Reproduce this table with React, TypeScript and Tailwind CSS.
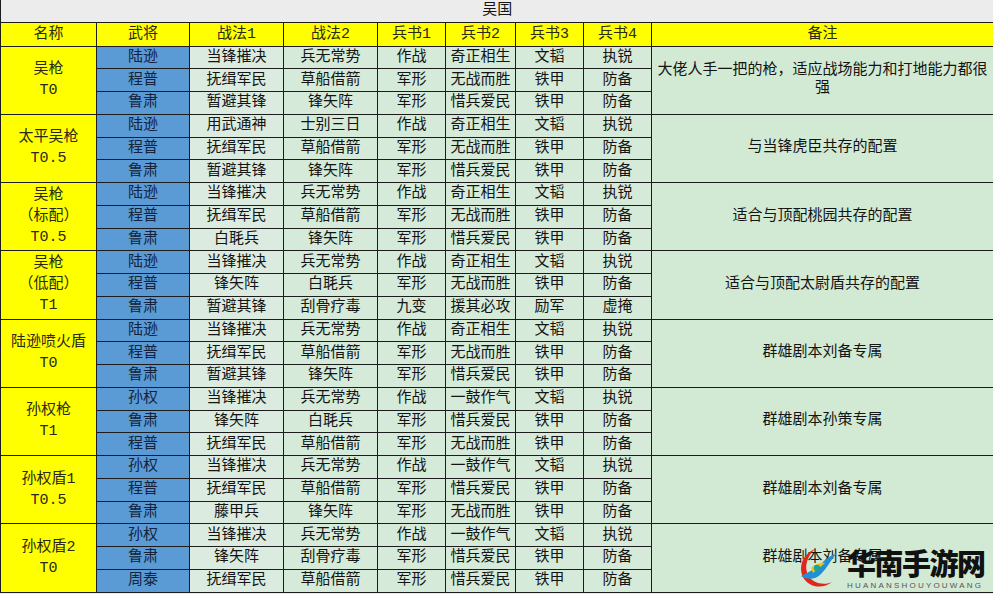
import React from "react";

type Row = [string, string, string, string, string, string, string];
type Group = { name: string[]; rows: Row[]; note: string };

const groups: Group[] = [
  {
    name: ["吴枪", "T0"],
    rows: [
      ["陆逊", "当锋摧决", "兵无常势", "作战", "奇正相生", "文韬", "执锐"],
      ["程普", "抚缉军民", "草船借箭", "军形", "无战而胜", "铁甲", "防备"],
      ["鲁肃", "暂避其锋", "锋矢阵", "军形", "惜兵爱民", "铁甲", "防备"],
    ],
    note: "大佬人手一把的枪，适应战场能力和打地能力都很强",
  },
  {
    name: ["太平吴枪", "T0.5"],
    rows: [
      ["陆逊", "用武通神", "士别三日", "作战", "奇正相生", "文韬", "执锐"],
      ["程普", "抚缉军民", "草船借箭", "军形", "无战而胜", "铁甲", "防备"],
      ["鲁肃", "暂避其锋", "锋矢阵", "军形", "惜兵爱民", "铁甲", "防备"],
    ],
    note: "与当锋虎臣共存的配置",
  },
  {
    name: ["吴枪", "（标配）", "T0.5"],
    rows: [
      ["陆逊", "当锋摧决", "兵无常势", "作战", "奇正相生", "文韬", "执锐"],
      ["程普", "抚缉军民", "草船借箭", "军形", "无战而胜", "铁甲", "防备"],
      ["鲁肃", "白毦兵", "锋矢阵", "军形", "惜兵爱民", "铁甲", "防备"],
    ],
    note: "适合与顶配桃园共存的配置",
  },
  {
    name: ["吴枪", "（低配）", "T1"],
    rows: [
      ["陆逊", "当锋摧决", "兵无常势", "作战", "奇正相生", "文韬", "执锐"],
      ["程普", "锋矢阵", "白毦兵", "军形", "无战而胜", "铁甲", "防备"],
      ["鲁肃", "暂避其锋", "刮骨疗毒", "九变", "援其必攻", "励军", "虚掩"],
    ],
    note: "适合与顶配太尉盾共存的配置",
  },
  {
    name: ["陆逊喷火盾", "T0"],
    rows: [
      ["陆逊", "当锋摧决", "兵无常势", "作战", "奇正相生", "文韬", "执锐"],
      ["程普", "抚缉军民", "草船借箭", "军形", "无战而胜", "铁甲", "防备"],
      ["鲁肃", "暂避其锋", "锋矢阵", "军形", "惜兵爱民", "铁甲", "防备"],
    ],
    note: "群雄剧本刘备专属",
  },
  {
    name: ["孙权枪", "T1"],
    rows: [
      ["孙权", "当锋摧决", "兵无常势", "作战", "一鼓作气", "文韬", "执锐"],
      ["鲁肃", "锋矢阵", "白毦兵", "军形", "惜兵爱民", "铁甲", "防备"],
      ["程普", "抚缉军民", "草船借箭", "军形", "无战而胜", "铁甲", "防备"],
    ],
    note: "群雄剧本孙策专属",
  },
  {
    name: ["孙权盾1", "T0.5"],
    rows: [
      ["孙权", "当锋摧决", "兵无常势", "作战", "一鼓作气", "文韬", "执锐"],
      ["程普", "抚缉军民", "草船借箭", "军形", "惜兵爱民", "铁甲", "防备"],
      ["鲁肃", "藤甲兵", "锋矢阵", "军形", "无战而胜", "铁甲", "防备"],
    ],
    note: "群雄剧本刘备专属",
  },
  {
    name: ["孙权盾2", "T0"],
    rows: [
      ["孙权", "当锋摧决", "兵无常势", "作战", "一鼓作气", "文韬", "执锐"],
      ["鲁肃", "锋矢阵", "刮骨疗毒", "军形", "惜兵爱民", "铁甲", "防备"],
      ["周泰", "抚缉军民", "草船借箭", "军形", "惜兵爱民", "铁甲", "防备"],
    ],
    note: "群雄剧本刘备专属",
  },
];

const headers = ["名称", "武将", "战法1", "战法2", "兵书1", "兵书2", "兵书3", "兵书4", "备注"];

const cell = "border border-[#1c1c1c] p-0 text-center align-middle leading-none whitespace-nowrap";

function Logo() {
  return (
    <svg width="42" height="44" viewBox="0 0 42 44">
      <path d="M18 3 C6 8 1 20 6 31 C11 41 25 44 35 36 C27 40 15 37 11 29 C7 21 10 10 18 3 Z" fill="#e0261f" />
      <path d="M4 30 C12 26 20 22 26 16 C30 12 34 9 39 8 C34 14 30 22 24 28 C18 34 10 34 4 30 Z" fill="#1f8fd8" />
      <path d="M14 22 C18 18 24 16 28 17 C24 20 20 24 16 27 Z" fill="#f2c21b" />
      <circle cx="20" cy="22" r="3.2" fill="#1aa59a" />
    </svg>
  );
}

export default function App() {
  return (
    <div className="relative w-[993px] h-[594px] overflow-hidden bg-[#ececec] text-[#141414] [font-family:'Liberation_Mono','Noto_Sans_CJK_SC',monospace] text-[15px]">
      <table className="table-fixed border-collapse w-[993px]">
        <colgroup>
          <col className="w-[96px]" />
          <col className="w-[93px]" />
          <col className="w-[94px]" />
          <col className="w-[94px]" />
          <col className="w-[68px]" />
          <col className="w-[70px]" />
          <col className="w-[68px]" />
          <col className="w-[68px]" />
          <col className="w-[342px]" />
        </colgroup>
        <tbody>
          <tr className="h-[22px]">
            <td colSpan={9} className="border-l border-b border-[#1c1c1c] p-0 text-center align-middle leading-none bg-[#ececec]">
              吴国
            </td>
          </tr>
          <tr className="h-[24px]">
            {headers.map((h) => (
              <td key={h} className={`${cell} bg-[#ffff00] text-[#2a2a10]`}>
                {h}
              </td>
            ))}
          </tr>
          {groups.map((g, gi) =>
            g.rows.map((r, ri) => (
              <tr key={`${gi}-${ri}`} className="h-[22.75px]">
                {ri === 0 && (
                  <td rowSpan={3} className={`${cell} bg-[#ffff00] text-[#2a2a10]`}>
                    {g.name.map((n, ni) => (
                      <div key={ni} className="leading-[21px]">
                        {n}
                      </div>
                    ))}
                  </td>
                )}
                <td className={`${cell} bg-[#5b9bd5] text-[#13233d]`}>{r[0]}</td>
                <td className={`${cell} bg-[#dcebdf]`}>{r[1]}</td>
                <td className={`${cell} bg-[#d5ead8]`}>{r[2]}</td>
                <td className={`${cell} bg-[#d5ead8]`}>{r[3]}</td>
                <td className={`${cell} bg-[#d5ead8]`}>{r[4]}</td>
                <td className={`${cell} bg-[#d5ead8]`}>{r[5]}</td>
                <td className={`${cell} bg-[#d5ead8]`}>{r[6]}</td>
                {ri === 0 && (
                  <td
                    rowSpan={3}
                    className="border border-[#1c1c1c] px-[3px] py-0 text-center align-middle bg-[#d2e9d3] text-[15px] whitespace-normal"
                  >
                    <div className="leading-[18px]">{g.note}</div>
                  </td>
                )}
              </tr>
            ))
          )}
        </tbody>
      </table>
      <div className="absolute left-[797px] top-[546px] flex items-start gap-[8px]">
        <Logo />
        <div className="flex flex-col items-start pt-[1px]">
          <div className="[font-family:'Noto_Sans_CJK_SC',sans-serif] font-black text-[29px] leading-[30px] tracking-[-1.5px] text-[#111]">
            华南手游网
          </div>
          <div className="[font-family:'Liberation_Sans',sans-serif] text-[8px] leading-[10px] tracking-[2.2px] text-[#555] mt-[4px]">
            HUANANSHOUYOUWANG
          </div>
        </div>
      </div>
    </div>
  );
}
